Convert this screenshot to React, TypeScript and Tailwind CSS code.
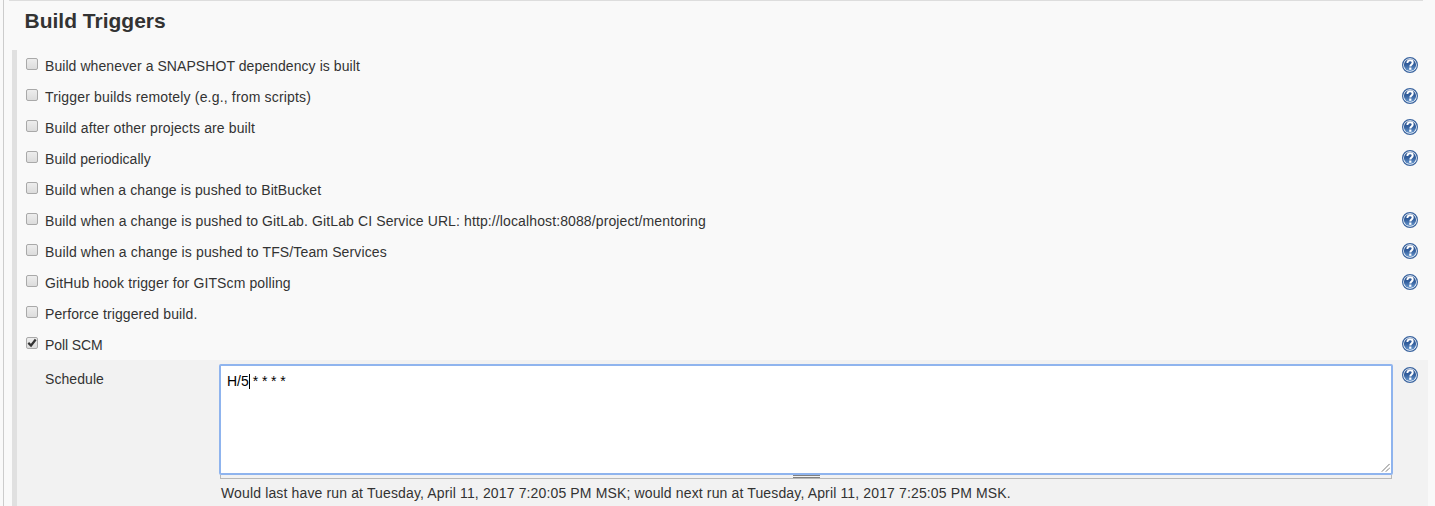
import React from "react";

type Trigger = { label: string; help: boolean; checked?: boolean; tracking: string };

const triggers: Trigger[] = [
  { label: "Build whenever a SNAPSHOT dependency is built", help: true, tracking: "tracking-[0.068px]" },
  { label: "Trigger builds remotely (e.g., from scripts)", help: true, tracking: "tracking-[0.17px]" },
  { label: "Build after other projects are built", help: true, tracking: "tracking-[0.13px]" },
  { label: "Build periodically", help: true, tracking: "tracking-[0.04px]" },
  { label: "Build when a change is pushed to BitBucket", help: false, tracking: "tracking-[0.09px]" },
  {
    label: "Build when a change is pushed to GitLab. GitLab CI Service URL: http://localhost:8088/project/mentoring",
    help: true,
    tracking: "tracking-[0.115px]",
  },
  { label: "Build when a change is pushed to TFS/Team Services", help: true, tracking: "tracking-[0.135px]" },
  { label: "GitHub hook trigger for GITScm polling", help: true, tracking: "tracking-[0.12px]" },
  { label: "Perforce triggered build.", help: false, tracking: "tracking-[0.12px]" },
  { label: "Poll SCM", help: true, checked: true, tracking: "tracking-[-0.08px]" },
];

function HelpIcon() {
  return (
    <svg width="16" height="16" viewBox="0 0 16 16" className="block shrink-0">
      <defs>
        <linearGradient id="helpFill" x1="0" y1="0" x2="0" y2="1">
          <stop offset="0" stopColor="#214a8a" />
          <stop offset="0.5" stopColor="#35619f" />
          <stop offset="1" stopColor="#6c9bd0" />
        </linearGradient>
      </defs>
      <circle cx="8" cy="8" r="7.4" fill="#fff" stroke="#3a649f" strokeWidth="1.2" />
      <circle cx="8" cy="8" r="6.1" fill="url(#helpFill)" />
      <path d="M5.400 6C5.400 4.100 6.500 3.300 8 3.300s2.700.8 2.700 2.300C10.700 7.500 8.300 7.500 8.300 9.500" fill="none" stroke="#fff" strokeWidth="2" />
      <rect x="7.200" y="10.500" width="2.200" height="2.300" fill="#fff" />
    </svg>
  );
}

function CheckBox({ checked }: { checked?: boolean }) {
  return (
    <span
      role="checkbox"
      aria-checked={!!checked}
      className="mt-2 block h-3 w-3 shrink-0 rounded-[2px] border border-[#a9a9a9] bg-linear-to-b from-[#ededed] to-[#dcdcdc]"
    >
      {checked && (
        <svg width="10" height="10" viewBox="0 0 10 10" className="block">
          <path d="M1.300 4.900 4 7.500 8.700 1.500" fill="none" stroke="#333" strokeWidth="2.200" />
        </svg>
      )}
    </span>
  );
}

function TriggerRow({ label, help, checked, tracking }: Trigger) {
  return (
    <div className="flex h-[31px] items-start pr-[10px] pl-[9px]">
      <CheckBox checked={checked} />
      <span className={`ml-[7px] pt-[6px] leading-5 whitespace-nowrap ${tracking}`}>{label}</span>
      {help && (
        <span className="mt-[7px] ml-auto">
          <HelpIcon />
        </span>
      )}
    </div>
  );
}

export default function App() {
  return (
    <div className="h-[506px] w-[1435px] overflow-hidden bg-[#f9f9f9] pl-[3px] font-['Liberation_Sans',Arial,sans-serif] text-[14px] text-[#333]">
      <div className="h-full border-l border-[#ccc] pr-[7px] pl-2">
        <div className="mr-[5px] -ml-[3px] h-px bg-[#ddd]" />
        <h2 className="h-[49px] pt-2 pl-[12.5px] text-[21px] leading-6 font-bold">Build Triggers</h2>
        <section className="flex h-[456px]">
          <div className="w-[5px] shrink-0 bg-[#e0e0e0]" />
          <div className="min-w-0 flex-1">
            {triggers.map((t) => (
              <TriggerRow key={t.label} {...t} />
            ))}
            <div className="flex h-[146px] bg-[#f2f2f2] pt-1 pr-[10px] pl-7">
              <label className="w-[174px] shrink-0 pt-[5px] leading-5 tracking-[0.07px]">Schedule</label>
              <div className="w-[1174px] shrink-0">
                <div className="flex h-[111px] rounded-[2px] border-2 border-[#8fb4ee] bg-white text-black">
                  <div className="flex h-[30px] items-center pl-[6px]">
                    <span>H/5</span>
                    <span className="h-[15px] w-px bg-black" />
                    <span className="pl-[3px] tracking-[-0.1px]">* * * *</span>
                  </div>
                  <svg width="10" height="10" viewBox="0 0 10 10" className="mt-auto ml-auto">
                    <path d="M1 8.500 8.500 1M5 8.500 8.500 5" stroke="#444" strokeDasharray="1.200 .3" />
                  </svg>
                </div>
                <div className="mx-px flex h-[4px] flex-col items-center border-x border-b border-[#b8b8b8]">
                  <div className="h-[3px] w-[27px] border-y border-[#808080] bg-[#f2f2f2]" />
                </div>
                <p className="pt-[4px] pl-[2px] leading-5 tracking-[0.14px] whitespace-nowrap">
                  Would last have run at Tuesday, April 11, 2017 7:20:05 PM MSK; would next run at Tuesday, April 11, 2017 7:25:05 PM MSK.
                </p>
              </div>
              <span className="mt-[3px] ml-auto">
                <HelpIcon />
              </span>
            </div>
          </div>
        </section>
      </div>
    </div>
  );
}
